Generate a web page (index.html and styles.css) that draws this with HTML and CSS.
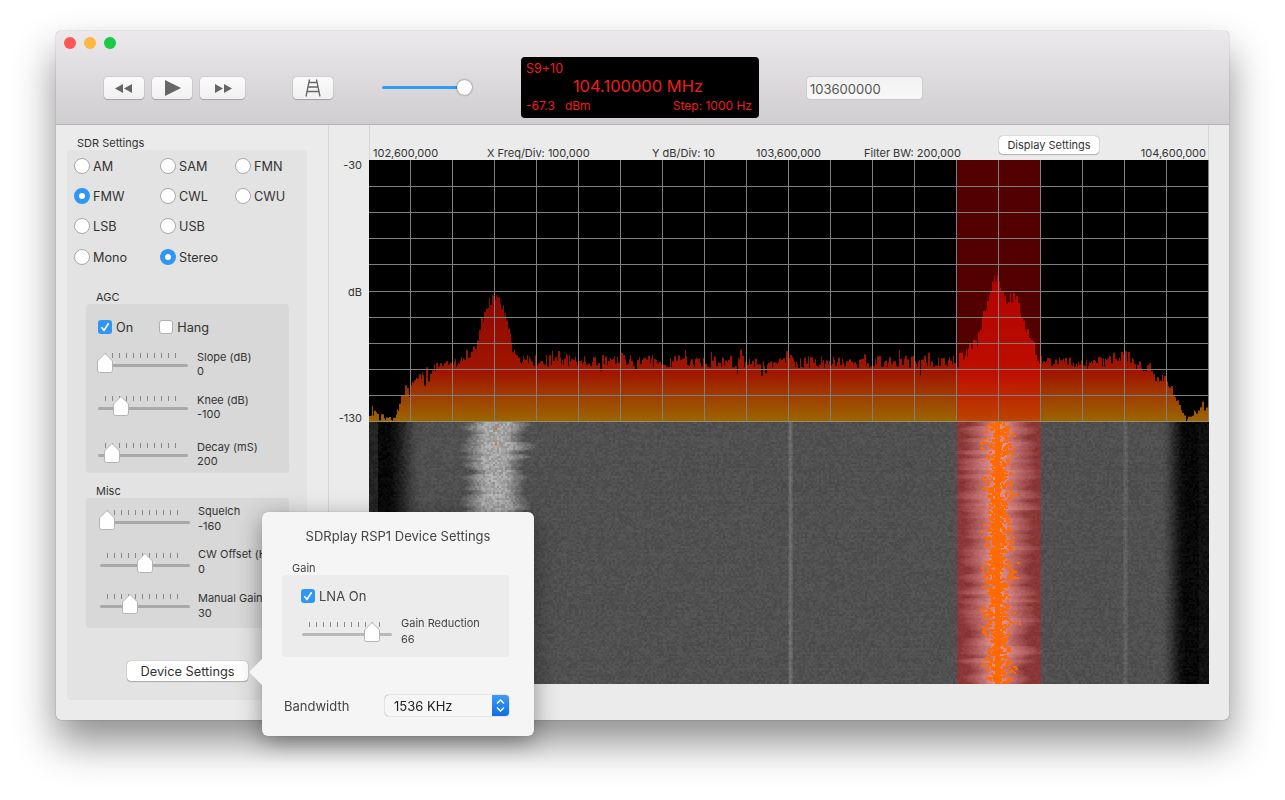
FILE: index.html
```html
<!DOCTYPE html>
<html lang="en">
<head>
  <meta charset="UTF-8" />
  <title>SDR Receiver</title>
  <link rel="stylesheet" href="styles.css">
</head>
<body>
  <svg class="defs" aria-hidden="true">
    <symbol id="thumb" viewBox="0 0 18 22">
      <path d="M9 1.5 L16.5 9 V18.5 Q16.5 20.5 14.5 20.5 H3.5 Q1.5 20.5 1.5 18.5 V9 Z" fill="#fff" stroke="#b4b4b4" stroke-width="1"/>
    </symbol>
    <symbol id="check" viewBox="0 0 14 14">
      <path d="M3.4 7.2 L6 10.4 L10.6 3.2" fill="none" stroke="#fff" stroke-width="1.7"/>
    </symbol>
  </svg>

  <div class="window">
    <div class="lights">
      <span class="light red"></span>
      <span class="light amber"></span>
      <span class="light green"></span>
    </div>

    <div class="toolbar">
      <div class="transport">
        <button class="tool">
          <svg width="18" height="9" viewBox="0 0 18 9"><path d="M0 4.5 L8 0 V9 Z M9 4.5 L17 0 V9 Z" fill="#666"/></svg>
        </button>
        <button class="tool">
          <svg class="play" width="16" height="16" viewBox="0 0 16 16"><path d="M0 0 L16 8 L0 16 Z" fill="#666"/></svg>
        </button>
        <button class="tool tool-wide">
          <svg width="18" height="9" viewBox="0 0 18 9"><path d="M1 0 L9 4.5 L1 9 Z M10 0 L18 4.5 L10 9 Z" fill="#666"/></svg>
        </button>
      </div>
      <button class="tool tool-gap">
        <svg width="16" height="18" viewBox="0 0 16 18"><path d="M4.5 0.5 L1 17.5 M11.5 0.5 L15 17.5 M3.5 3.5 H12.5 M3 8 H13 M2.3 12.5 H13.7" fill="none" stroke="#666" stroke-width="1.3"/></svg>
      </button>
      <div class="volume">
        <div class="volume-knob"></div>
      </div>
      <div class="readout">
        <div class="readout-top">S9+10</div>
        <div class="readout-freq">104.100000 MHz</div>
        <div class="readout-bottom">
          <span>-67.3 &nbsp; dBm</span>
          <span>Step: 1000 Hz</span>
        </div>
      </div>
      <input class="freq-input" type="text" value="103600000">
    </div>

    <div class="main">
      <div class="sidebar">
        <div class="group-title">SDR Settings</div>
        <div class="group">
          <div class="modes">
            <label class="radio"><i></i>AM</label>
            <label class="radio"><i></i>SAM</label>
            <label class="radio"><i></i>FMN</label>
            <label class="radio on"><i></i>FMW</label>
            <label class="radio"><i></i>CWL</label>
            <label class="radio"><i></i>CWU</label>
            <label class="radio"><i></i>LSB</label>
            <label class="radio"><i></i>USB</label>
            <span></span>
            <label class="radio"><i></i>Mono</label>
            <label class="radio on"><i></i>Stereo</label>
          </div>

          <div class="sub-title sub-title-agc">AGC</div>
          <div class="sub agc">
            <div class="checks">
              <label class="check on"><svg><use href="#check"/></svg>On</label>
              <label class="check"><svg></svg>Hang</label>
            </div>
            <div class="row">
              <div class="slider"><div class="track"></div><div class="ticks"></div><svg class="thumb" style="left:-2px"><use href="#thumb"/></svg></div>
              <div class="value"><div>Slope (dB)</div><div>0</div></div>
            </div>
            <div class="row">
              <div class="slider"><div class="track"></div><div class="ticks"></div><svg class="thumb" style="left:14px"><use href="#thumb"/></svg></div>
              <div class="value"><div>Knee (dB)</div><div>-100</div></div>
            </div>
            <div class="row row-far">
              <div class="slider"><div class="track"></div><div class="ticks"></div><svg class="thumb" style="left:5px"><use href="#thumb"/></svg></div>
              <div class="value"><div>Decay (mS)</div><div>200</div></div>
            </div>
          </div>

          <div class="sub-title sub-title-misc">Misc</div>
          <div class="sub misc">
            <div class="row">
              <div class="slider"><div class="track"></div><div class="ticks"></div><svg class="thumb" style="left:-2px"><use href="#thumb"/></svg></div>
              <div class="value"><div>Squelch</div><div>-160</div></div>
            </div>
            <div class="row">
              <div class="slider"><div class="track"></div><div class="ticks"></div><svg class="thumb" style="left:36px"><use href="#thumb"/></svg></div>
              <div class="value"><div>CW Offset (Hz)</div><div>0</div></div>
            </div>
            <div class="row row-next">
              <div class="slider slider-high"><div class="track"></div><div class="ticks"></div><svg class="thumb" style="left:21px"><use href="#thumb"/></svg></div>
              <div class="value"><div>Manual Gain</div><div>30</div></div>
            </div>
          </div>

          <button class="push device-btn">Device Settings</button>
        </div>
      </div>

      <div class="axis">
        <span>-30</span>
        <span>dB</span>
        <span>-130</span>
      </div>

      <div class="plot">
        <div class="plot-head">
          <span>102,600,000</span>
          <span>X Freq/Div: 100,000</span>
          <span>Y dB/Div: 10</span>
          <span>103,600,000</span>
          <span>Filter BW: 200,000</span>
          <span>104,600,000</span>
          <button class="push display-btn">Display Settings</button>
        </div>
        <canvas id="scope" width="840" height="524"></canvas>
      </div>
    </div>

    <div class="popover">
      <svg class="pop-arrow" width="13" height="28" viewBox="0 0 13 28"><path d="M13 0 L0 13 Q-0.5 14 0 15 L13 28 Z" fill="#f5f5f5"/></svg>
      <div class="pop-title">SDRplay RSP1 Device Settings</div>
      <div class="pop-label">Gain</div>
      <div class="pop-box">
        <label class="check on pop-check"><svg><use href="#check"/></svg>LNA On</label>
        <div class="row pop-row">
          <div class="slider"><div class="track"></div><div class="ticks"></div><svg class="thumb" style="left:61px"><use href="#thumb"/></svg></div>
          <div class="value"><div>Gain Reduction</div><div>66</div></div>
        </div>
      </div>
      <div class="pop-band">
        <span>Bandwidth</span>
        <div class="select">
          <span class="select-text">1536 KHz</span>
          <span class="select-arrows">
            <svg width="9" height="15" viewBox="0 0 9 15"><path d="M1 5.5 L4.5 2 L8 5.5 M1 9.5 L4.5 13 L8 9.5" fill="none" stroke="#fff" stroke-width="1.4"/></svg>
          </span>
        </div>
      </div>
    </div>
  </div>
  <script src="script.js"></script>
</body>
</html>
```

FILE: styles.css
```css
body {
  box-sizing: border-box;
  height: 800px;
  margin: 0;
  padding: 31px 0 0 56px;
  background: #fff;
  font-family: Inter, "Liberation Sans", sans-serif;
  font-size: 11px;
  color: #333;
  overflow: hidden;
}

.defs {
  display: none;
}

button {
  font-family: inherit;
}

.window {
  position: relative;
  width: 1173px;
  height: 689px;
  border-radius: 5px;
  background: #ebebeb;
  box-shadow: 0 22px 42px rgba(0,0,0,0.45), 0 0 1px rgba(0,0,0,0.6);
}

/* title bar */
.lights {
  position: absolute;
  left: 8px;
  top: 6px;
  display: flex;
  gap: 8px;
}

.light {
  width: 12px;
  height: 12px;
  border-radius: 50%;
}

.red { background: #fc5753; }
.amber { background: #fdb743; }
.green { background: #1ac945; }

.toolbar {
  display: flex;
  align-items: center;
  box-sizing: border-box;
  height: 94px;
  padding: 20px 0 0 48px;
  border-bottom: 1px solid #b3b1b3;
  border-radius: 5px 5px 0 0;
  background: linear-gradient(#ebe9eb, #cfcdcf);
}

.transport {
  display: flex;
  gap: 8px;
  margin-top: 1px;
}

.tool {
  display: flex;
  align-items: center;
  justify-content: center;
  width: 40px;
  height: 22px;
  padding: 0;
  border: 0;
  border-radius: 4px;
  background: linear-gradient(#fbfbfb, #f0f0f0);
  box-shadow: 0 0 1px rgba(0,0,0,0.5), 0 1px 1px rgba(0,0,0,0.2);
}

.tool-wide {
  width: 45px;
}

.tool-gap {
  margin: 1px 0 0 48px;
}

.play {
  margin-left: 2px;
}

.volume {
  position: relative;
  width: 83px;
  height: 3px;
  margin: 0 8px 0 49px;
  border-radius: 2px;
  background: #2f9bf6;
}

.volume-knob {
  position: absolute;
  right: -7px;
  top: -6px;
  width: 15px;
  height: 15px;
  border-radius: 50%;
  background: #fff;
  box-shadow: 0 0 2px rgba(0,0,0,0.65);
}

.readout {
  box-sizing: border-box;
  width: 238px;
  height: 61px;
  margin-left: 48px;
  padding: 4px 7px 3px 5px;
  border-radius: 4px;
  background: #000;
  color: #f01c1c;
  font-size: 12.5px;
  line-height: 16px;
}

.readout-freq {
  height: 19px;
  padding-right: 2px;
  font-size: 16.5px;
  line-height: 19px;
  text-align: center;
}

.readout-bottom {
  display: flex;
  justify-content: space-between;
  margin-top: 2px;
  font-size: 12px;
}

.freq-input {
  box-sizing: border-box;
  width: 115px;
  height: 22px;
  margin: 1px 0 0 48px;
  padding: 2px 3px 0;
  border: 0;
  border-radius: 3px;
  background: linear-gradient(#f1f1f1, #f9f9f9);
  box-shadow: 0 0 1px rgba(0,0,0,0.55);
  font-family: inherit;
  font-size: 13px;
  color: #555;
}

/* panels */
.main {
  display: flex;
  height: 595px;
}

.sidebar {
  box-sizing: border-box;
  width: 273px;
  padding: 11px 0 0 11px;
  border-right: 1px solid #d6d6d6;
}

.group-title {
  height: 14px;
  padding-left: 10px;
  line-height: 14px;
}

.group {
  box-sizing: border-box;
  width: 240px;
  height: 550px;
  padding-top: 1px;
  border-radius: 4px;
  background: #e3e3e3;
}

.modes {
  display: grid;
  grid-template-columns: 86px 75px 1fr;
  grid-template-rows: 30px 30px 30px 32px;
  padding-left: 7px;
}

.radio {
  display: flex;
  align-items: center;
  gap: 3px;
  font-size: 12.7px;
}

.radio i {
  box-sizing: border-box;
  width: 16px;
  height: 16px;
  border-radius: 50%;
  border: 1px solid #a8a8a8;
  background: #fff;
}

.radio.on i {
  border: 5px solid #2f96f5;
}

.sub-title {
  height: 14px;
  padding-left: 29px;
  line-height: 14px;
}

.sub-title-agc { margin-top: 17px; }
.sub-title-misc { margin-top: 11px; }

.sub {
  box-sizing: border-box;
  width: 203px;
  margin-left: 19px;
  border-radius: 4px;
  background: #d8d8d8;
}

.agc {
  height: 169px;
  padding: 15px 0 0 12px;
}

.misc {
  height: 130px;
  padding: 6px 0 0 14px;
}

.checks {
  display: flex;
  gap: 26px;
  margin-bottom: 16px;
}

.check {
  display: flex;
  align-items: center;
  gap: 4px;
  height: 16px;
  font-size: 12.7px;
}

.check svg {
  box-sizing: border-box;
  width: 14px;
  height: 14px;
  border: 1px solid #b0b0b0;
  border-radius: 3px;
  background: #fff;
}

.check.on svg {
  border: 0;
  background: #2f96f5;
}

/* slider with label and value */
.row {
  display: flex;
  gap: 9px;
  margin-bottom: 16px;
}

.row-far {
  margin-top: 20px;
}

.misc .row {
  gap: 8px;
  margin-bottom: 13px;
}

.misc .row-next {
  margin-top: 14px;
}

.slider {
  position: relative;
  flex: none;
  width: 90px;
  height: 24px;
}

.misc .slider { margin-top: 4px; }
.misc .slider-high { margin-top: 1px; }

.track {
  position: absolute;
  left: 0;
  right: 0;
  top: 13px;
  height: 3px;
  border-radius: 2px;
  background: #a9a9a9;
}

.ticks {
  position: absolute;
  left: 7px;
  width: 77px;
  top: 2px;
  height: 5px;
  background: repeating-linear-gradient(to right, #888 0 1px, transparent 1px 7px);
}

.thumb {
  position: absolute;
  top: 1px;
  width: 18px;
  height: 22px;
}

.value {
  line-height: 13.5px;
  white-space: nowrap;
}

.misc .value {
  line-height: 15px;
}

.push {
  height: 20px;
  padding: 0;
  border: 0;
  border-radius: 4px;
  background: #fff;
  box-shadow: 0 0 1px rgba(0,0,0,0.6), 0 1px 1px rgba(0,0,0,0.2);
  color: #333;
  font-size: 12.8px;
}

.device-btn {
  display: block;
  width: 121px;
  margin: 33px 0 0 60px;
}

.axis {
  box-sizing: border-box;
  display: flex;
  flex-direction: column;
  justify-content: space-between;
  align-items: flex-end;
  width: 40px;
  height: 300px;
  padding: 33px 7px 0 0;
}

.axis span {
  line-height: 14px;
}

.plot {
  width: 840px;
}

.plot-head {
  position: relative;
  box-sizing: border-box;
  display: grid;
  grid-template-columns: 114px 165px 104px 108px 1fr auto;
  align-items: end;
  height: 35px;
  padding: 0 2px 0 3px;
  border-left: 1px solid #d6d6d6;
  border-right: 1px solid #d6d6d6;
  line-height: 14px;
}

.display-btn {
  position: absolute;
  left: 629px;
  top: 11px;
  width: 100px;
  height: 18px;
  font-size: 11px;
}

#scope {
  display: block;
}

/* device settings popover */
.popover {
  position: absolute;
  left: 206px;
  top: 481px;
  box-sizing: border-box;
  width: 272px;
  height: 224px;
  padding-top: 16px;
  border-radius: 6px;
  background: #f5f5f5;
  box-shadow: 0 6px 24px rgba(0,0,0,0.4), 0 0 1px rgba(0,0,0,0.3);
  color: #444;
}

.pop-arrow {
  position: absolute;
  left: -12px;
  top: 146px;
}

.pop-title {
  height: 16px;
  font-size: 13px;
  line-height: 16px;
  text-align: center;
}

.pop-label {
  height: 14px;
  margin-top: 17px;
  padding-left: 30px;
  line-height: 14px;
}

.pop-box {
  box-sizing: border-box;
  width: 227px;
  height: 82px;
  margin-left: 20px;
  padding: 13px 0 0 19px;
  border-radius: 3px;
  background: #ececec;
}

.pop-check,
.pop-band {
  font-size: 13px;
}

.pop-row {
  margin: 11px 0 0 1px;
}

.pop-row .slider {
  margin-top: 5px;
}

.pop-row .track {
  background: #b8b8b8;
}

.pop-row .value {
  line-height: 16px;
}

.pop-band {
  display: flex;
  align-items: center;
  justify-content: space-between;
  height: 21px;
  margin: 38px 25px 0 22px;
}

.select {
  position: relative;
  display: flex;
  align-items: center;
  box-sizing: border-box;
  width: 124px;
  height: 21px;
  padding-left: 9px;
  border-radius: 4px;
  background: #f6f6f6;
  box-shadow: 0 0 1px rgba(0,0,0,0.7);
  color: #222;
}

.select-arrows {
  position: absolute;
  right: 0;
  top: 0;
  bottom: 0;
  display: flex;
  align-items: center;
  justify-content: center;
  width: 17px;
  border-radius: 0 4px 4px 0;
  background: linear-gradient(#3f9cf7, #0f6ee0);
}
```

FILE: script.js
```js
// draws the spectrum and the waterfall on one canvas
var canvas = document.getElementById('scope');
var ctx = canvas.getContext('2d');

var W = 840, SPEC = 261, H = 524;
var BAND_L = 588, BAND_R = 672;

// small seeded generator so each load looks the same
var seed = 12345;
function rnd() {
  seed = (seed * 1664525 + 1013904223) % 4294967296;
  return seed / 4294967296;
}

// height of the trace above the floor, [screen x, px]
var env = [
  [369,8],[381,8],[383,3],[392,2],[395,2],[400,21],[405,34],[410,41],[437,56],[453,59],
  [473,71],[481,99],[490,122],[499,124],[508,99],[513,74],[523,61],
  [780,60],[789,68],[795,60],[955,60],[963,66],[977,81],[983,106],[990,131],[997,148],
  [1003,124],[1015,123],[1025,94],[1032,81],[1037,63],[1042,60],[1118,60],[1123,70],
  [1130,60],[1150,54],[1155,44],[1170,38],[1173,23],[1180,14],[1185,1],[1197,11],[1209,12]
];

function height(x) {
  for (var i = 1; i < env.length; i++) {
    if (x <= env[i][0]) {
      var a = env[i - 1], b = env[i];
      return a[1] + (b[1] - a[1]) * (x - a[0]) / (b[0] - a[0]);
    }
  }
  return 12;
}

function clamp(v) {
  return v < 0 ? 0 : v > 255 ? 255 : v;
}

function smooth(a, b, x) {
  var t = (x - a) / (b - a);
  t = t < 0 ? 0 : t > 1 ? 1 : t;
  return t * t * (3 - 2 * t);
}

function drawSpectrum() {
  ctx.fillStyle = '#000';
  ctx.fillRect(0, 0, W, SPEC);

  var grad = ctx.createLinearGradient(0, 120, 0, SPEC);
  grad.addColorStop(0, '#8c0500');
  grad.addColorStop(0.66, '#a01600');
  grad.addColorStop(1, '#9c6600');
  ctx.fillStyle = grad;

  var x = 0;
  while (x < W) {
    var w = rnd() < 0.45 ? 2 : 1;
    var e = height(x + 369);
    var h = e + (rnd() - 0.55) * Math.min(12, 4 + e * 0.2);
    if (rnd() < 0.07) h += 6;
    if (rnd() < 0.03) h -= 9;
    if (h < 0) h = 0;
    ctx.fillRect(x, SPEC - h, w, h);
    x += w;
  }

  ctx.fillStyle = 'rgba(255,0,0,0.32)';
  ctx.fillRect(BAND_L, 0, BAND_R - BAND_L, SPEC);

  ctx.fillStyle = '#808080';
  for (var i = 0; i < 20; i++) {
    ctx.fillRect(41 + 42 * i, 0, 1, SPEC);
  }
  for (var j = 1; j <= 10; j++) {
    ctx.fillRect(0, Math.round(26.1 * j), W, 1);
  }
}

// how much noise floor the receiver passes at a screen x
function passband(sx) {
  if (sx < 378) return 0.38;
  if (sx > 1198) return 0.12;
  return smooth(386, 422, sx) * (1 - smooth(1160, 1186, sx));
}

function drawWaterfall() {
  var rows = H - SPEC - 1;
  var img = ctx.createImageData(W, rows);
  var d = img.data;
  var haloC = 20, haloL = 20, goalC = 20, goalL = 20, jitter = 0;

  // noise in 2px cells, softer than single pixels
  var cells = [];
  for (var c = 0; c < (W >> 1) * (rows >> 1) + W; c++) {
    cells.push(rnd() - 0.5);
  }

  for (var y = 0; y < rows; y++) {
    if (y % 4 === 0) {
      goalC = 12 + rnd() * 24;
      goalL = 16 + rnd() * 18;
      jitter = (rnd() - 0.5) * 6;
    }
    haloC += (goalC - haloC) * 0.3;
    haloL += (goalL - haloL) * 0.3;
    var rowShade = (rnd() - 0.5) * 3;

    for (var x = 0; x < W; x++) {
      var sx = x + 369;
      var n = cells[(y >> 1) * (W >> 1) + (x >> 1)];
      var v = 8 + 72 * passband(sx) + n * 14 + (rnd() - 0.5) * 6 + rowShade;

      // steady carriers
      if (Math.abs(sx - 790) <= 2) v += (3 - Math.abs(sx - 790)) * 9 + rnd() * 8;
      if (Math.abs(sx - 1125) <= 2) v += (3 - Math.abs(sx - 1125)) * 4 + rnd() * 10;

      // station on the left
      var dl = Math.abs(sx - 495 - jitter);
      if (dl < haloL + 8) {
        var k = 1 - dl / (haloL + 8);
        v += 85 * Math.min(1, k * 1.5) + n * 34 * k;
      }

      // tuned station
      var dc = Math.abs(sx - 998 - jitter);
      if (dc < haloC + 12) {
        var q = 1 - dc / (haloC + 12);
        v += 140 * q;
      }

      var r = v, g = v, b = v;
      if (x >= BAND_L && x < BAND_R) {
        r = v * 0.68 + 82;
        g = v * 0.68;
        b = v * 0.68;
      }

      var p = (y * W + x) * 4;
      d[p] = clamp(r);
      d[p + 1] = clamp(g);
      d[p + 2] = clamp(b);
      d[p + 3] = 255;
    }
  }
  ctx.putImageData(img, 0, SPEC + 1);

  // clipped samples of the tuned station
  ctx.fillStyle = '#ff6a00';
  for (var m = 0; m < rows; m += 1) {
    var spread = 7 + 7 * Math.abs(Math.sin(m / 14));
    for (var t = 0; t < 4; t++) {
      var dx = (rnd() + rnd() - 1) * spread * 1.4;
      ctx.fillRect(Math.round(628 + dx), SPEC + 1 + m, 2 + Math.floor(rnd() * 3), 2);
    }
    ctx.fillRect(626, SPEC + 1 + m, 5, 1);
    if (rnd() < 0.06) {
      ctx.fillRect(Math.round(628 + (rnd() - 0.5) * 44), SPEC + 1 + m, 3, 2);
    }
  }
  ctx.fillRect(126, SPEC + 7, 2, 2);
  ctx.fillRect(126, SPEC + 22, 2, 2);

  ctx.fillStyle = '#8c8c78';
  ctx.fillRect(0, SPEC, W, 1);
}

drawSpectrum();
drawWaterfall();
```
